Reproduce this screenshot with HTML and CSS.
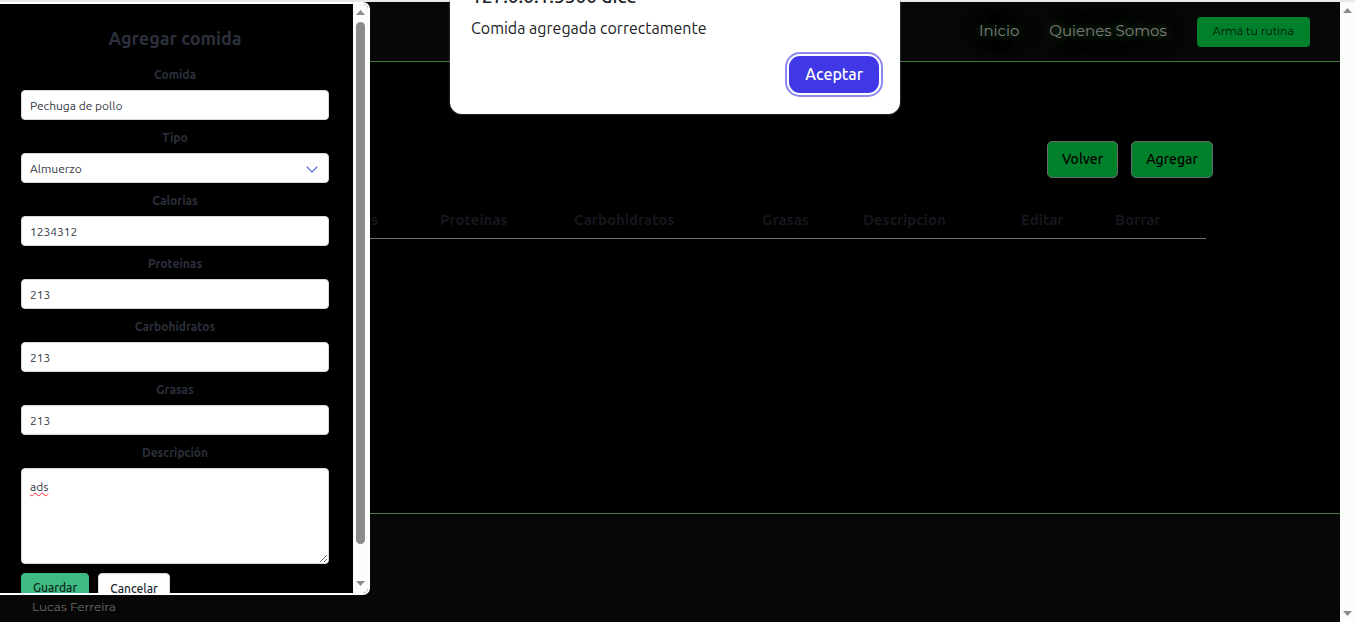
FILE: index.html
```html
<!DOCTYPE html>
<html lang="es">
<head>
  <meta charset="utf-8">
  <meta name="viewport" content="width=device-width, initial-scale=1">
  <title>Comidas</title>
  <link rel="stylesheet" href="styles.css">
</head>
<body>
  <div class="page">
    <header class="header">
      <nav class="nav">
        <a class="nav-link" href="#">Inicio</a>
        <a class="nav-link" href="#">Quienes Somos</a>
        <a class="nav-cta" href="#">Armá tu rutina</a>
      </nav>
    </header>
    <main class="main">
      <div class="actions">
        <button class="action" type="button">Volver</button>
        <button class="action" type="button">Agregar</button>
      </div>
      <table class="meals">
        <colgroup>
          <col>
          <col class="col-type">
          <col class="col-calories">
          <col class="col-protein">
          <col class="col-carbs">
          <col class="col-fat">
          <col class="col-description">
          <col class="col-edit">
          <col class="col-delete">
        </colgroup>
        <thead>
          <tr>
            <th>Comida</th>
            <th>Tipo</th>
            <th>Calorias</th>
            <th>Proteinas</th>
            <th>Carbohidratos</th>
            <th>Grasas</th>
            <th>Descripcion</th>
            <th>Editar</th>
            <th>Borrar</th>
          </tr>
        </thead>
      </table>
    </main>
    <footer class="footer">Lucas Ferreira</footer>
  </div>

  <div class="scrollbar page-scrollbar">
    <svg class="arrow" viewBox="0 0 9 5"><path d="M0 5 4.500 0 9 5z"/></svg>
    <svg class="arrow" viewBox="0 0 9 5"><path d="M0 0 4.500 5 9 0z"/></svg>
  </div>

  <aside class="drawer">
    <form class="form">
      <h2 class="form-title">Agregar comida</h2>
      <label class="label" for="comida">Comida</label>
      <input class="control" id="comida" type="text" value="Pechuga de pollo">
      <label class="label" for="tipo">Tipo</label>
      <div class="select-wrap">
        <select class="control" id="tipo"><option>Almuerzo</option></select>
        <svg class="chevron" viewBox="0 0 12 7"><path d="M.7.700 6 6 11.300.700"/></svg>
      </div>
      <label class="label" for="calorias">Calorias</label>
      <input class="control" id="calorias" type="text" value="1234312">
      <label class="label" for="proteinas">Proteinas</label>
      <input class="control" id="proteinas" type="text" value="213">
      <label class="label" for="carbohidratos">Carbohidratos</label>
      <input class="control" id="carbohidratos" type="text" value="213">
      <label class="label" for="grasas">Grasas</label>
      <input class="control" id="grasas" type="text" value="213">
      <label class="label" for="descripcion">Descripción</label>
      <textarea class="control control-area" id="descripcion">ads</textarea>
      <div class="form-buttons">
        <button class="button button-save" type="button">Guardar</button>
        <button class="button" type="button">Cancelar</button>
      </div>
    </form>
    <div class="scrollbar drawer-scrollbar">
      <svg class="arrow" viewBox="0 0 9 5"><path d="M0 5 4.500 0 9 5z"/></svg>
      <div class="thumb"></div>
      <svg class="arrow" viewBox="0 0 9 5"><path d="M0 0 4.500 5 9 0z"/></svg>
    </div>
  </aside>

  <div class="alert" role="alertdialog" aria-labelledby="alert-title" aria-describedby="alert-text">
    <h1 class="alert-title" id="alert-title">127.0.0.1:5500 dice</h1>
    <p class="alert-text" id="alert-text">Comida agregada correctamente</p>
    <button class="alert-button" type="button">Aceptar</button>
  </div>
</body>
</html>
```

FILE: styles.css
```css
* {
  box-sizing: border-box;
}

body {
  margin: 0;
  height: 100vh;
  overflow: hidden;
  display: flex;
  border-top: 2px solid #e8eaea;
  background: #000;
  font-family: Ubuntu, "Noto Sans", sans-serif;
}

.page {
  flex: 1;
  display: flex;
  flex-direction: column;
}

.header {
  background: #070707;
  border-bottom: 1px solid #477a43;
  padding: 15px 30px 14px;
}

.nav {
  display: flex;
  justify-content: flex-end;
  align-items: flex-start;
  gap: 30px;
  font-family: Montserrat, Inter, sans-serif;
}

.nav-link {
  color: #7f7f7f;
  font-size: 15px;
  line-height: 28px;
  text-decoration: none;
  text-shadow: 0 0 10px #2f6a2f, 0 0 24px #24381a;
}

.nav-cta {
  padding: 0 15px 2px;
  border: solid #00802b;
  border-width: 0 1px;
  border-radius: 4px;
  background: #00802b;
  color: #001204;
  font-size: 11px;
  line-height: 28px;
  text-decoration: none;
}

.main {
  flex: 1;
  padding-top: 79px;
}

.actions {
  display: flex;
  justify-content: flex-end;
  gap: 13px;
  padding-right: 127px;
}

.action {
  height: 37px;
  padding: 0 14px 2px;
  border: 1px solid #6b6b6b;
  border-radius: 5px;
  background: #00802b;
  color: #000;
  font-family: inherit;
  font-size: 14px;
  font-weight: 500;
}

.meals {
  width: 80%;
  margin: 21px auto 0;
  table-layout: fixed;
  border-collapse: collapse;
}

.meals th {
  height: 39px;
  padding: 2px 0 0;
  border-bottom: 1px solid #6f6f6f;
  color: #15171c;
  font-size: 15px;
  font-weight: 600;
  text-align: left;
}

.col-type { width: 100px; }
.col-calories { width: 119px; }
.col-protein { width: 134px; }
.col-carbs { width: 188px; }
.col-fat { width: 101px; }
.col-description { width: 158px; }
.col-edit { width: 94px; }
.col-delete { width: 91px; }

.footer {
  padding: 84px 32px 6px;
  border-top: 1px solid #477a43;
  background: #070707;
  color: #6c6c68;
  font-family: Montserrat, Inter, sans-serif;
  font-size: 12px;
  line-height: 18px;
}

.scrollbar {
  display: flex;
  flex-direction: column;
  align-items: center;
  background: #fcfcfc;
}

.page-scrollbar {
  width: 15px;
  justify-content: space-between;
  padding: 6px 0;
}

.arrow {
  width: 9px;
  height: 5px;
  fill: #8b8b8b;
}

.drawer {
  position: absolute;
  top: 2px;
  bottom: 27px;
  left: 0;
  width: 370px;
  display: flex;
  overflow: hidden;
  border: solid #fff;
  border-width: 2px 2px 2px 0;
  border-radius: 0 7px 7px 0;
  background: #000;
}

.drawer-scrollbar {
  width: 15px;
  padding: 6px 0 7px;
  gap: 7px;
}

.thumb {
  width: 9px;
  flex: 1;
  margin-bottom: 30px;
  border-radius: 5px;
  background: #8b8b8b;
}

.form {
  flex: 1;
  display: flex;
  flex-direction: column;
  padding: 23px 24px 0 21px;
}

.form-title {
  margin: 0 0 8px;
  color: #2b303b;
  font-size: 18px;
  font-weight: 700;
  line-height: 22px;
  text-align: center;
}

.label {
  margin: 9px 0 6px;
  color: #2b303b;
  font-size: 12px;
  font-weight: 600;
  line-height: 18px;
  text-align: center;
}

.control {
  flex: none;
  display: block;
  width: 100%;
  height: 30px;
  margin: 0;
  padding: 0 8px;
  border: 1px solid #d5d7e2;
  border-radius: 4px;
  appearance: none;
  background: #fff;
  color: #33373f;
  font-family: inherit;
  font-size: 12px;
}

.control-area {
  height: 96px;
  padding: 9px 8px;
  line-height: 18px;
  resize: vertical;
  text-decoration: underline wavy #ff2a2a 1px;
}

.select-wrap {
  position: relative;
}

.chevron {
  position: absolute;
  top: 13px;
  right: 11px;
  width: 12px;
  height: 7px;
  fill: none;
  stroke: #5468e8;
  stroke-width: 1.2;
}

.form-buttons {
  display: flex;
  gap: 9px;
  margin-top: 9px;
}

.button {
  flex: none;
  height: 30px;
  padding: 0 11px;
  border: 1px solid #d5d7e2;
  border-radius: 4px;
  background: #fff;
  color: #23272f;
  font-family: inherit;
  font-size: 12px;
  font-weight: 500;
}

.button-save {
  height: 28px;
  border-color: #3dbb82;
  background: #3dbb82;
  color: #12271d;
}

.alert {
  position: absolute;
  top: -20px;
  left: 450px;
  width: 450px;
  display: flex;
  flex-direction: column;
  padding: 4px 21px 21px;
  border-radius: 12px;
  background: #fff;
  box-shadow: 0 0 2px #777;
  color: #202124;
}

.alert-title {
  margin: 0;
  font-size: 19px;
  font-weight: 500;
  line-height: 24px;
}

.alert-text {
  margin: 8px 0 16px;
  font-size: 16px;
  line-height: 24px;
}

.alert-button {
  align-self: flex-end;
  height: 37px;
  padding: 0 16px 2px;
  border: 0;
  border-radius: 11px;
  background: #4038e6;
  box-shadow: 0 0 0 2px #fff, 0 0 0 4px #8c88f0;
  color: #fff;
  font-family: inherit;
  font-size: 16px;
  font-weight: 500;
}
```
